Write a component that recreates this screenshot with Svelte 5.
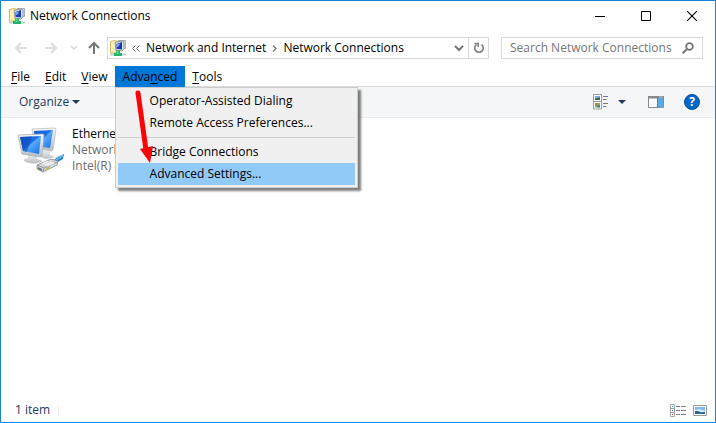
<script>
  let query = $state('');

  const menus = [
    { before: '', key: 'F', after: 'ile' },
    { before: '', key: 'E', after: 'dit' },
    { before: '', key: 'V', after: 'iew' },
    { before: 'Adva', key: 'n', after: 'ced' },
    { before: '', key: 'T', after: 'ools' }
  ];
  let openMenu = $state(3);

  const advancedItems = [
    'Operator-Assisted Dialing',
    'Remote Access Preferences...',
    null, // separator
    'Bridge Connections',
    'Advanced Settings...'
  ];
  let highlighted = $state(4);
</script>

{#snippet networkIcon()}
  <svg class="app-icon" width="16" height="16" viewBox="0 0 16 16" aria-hidden="true">
    <path d="M0.5 1.5l5-1 2 1v10l-2 1.5h-5z" fill="#f6df8b" stroke="#d5b865" />
    <path d="M1 2l4-.7v10.400l-4 .8z" fill="#fbf0b2" />
    <path d="M8 0.500h7.500v8h-3z" fill="#dfe3e6" stroke="#a7adb1" />
    <path d="M5 2.500l7-1.500 2 1v7l-2 2-6-1z" fill="#dce5ea" stroke="#8e999f" />
    <path d="M6.500 4l5.500-2v7.500l-5.500-.7z" fill="#1638b8" />
    <path d="M7 4.300l3-1-1 3-2 1z" fill="#7ba7ee" />
    <path d="M6 10.500h4v3h-4z" fill="#2aab61" />
    <path d="M0 13.500h16v2h-16z" fill="#c6cfcd" />
    <path d="M4 13h8v3h-8z" fill="#20b568" />
    <path d="M6.500 11h2v3h-2z" fill="#5fd792" />
  </svg>
{/snippet}

<div class="window">
  <header class="title-bar">
    {@render networkIcon()}
    <span class="title">Network Connections</span>
    <div class="window-buttons">
      <button aria-label="Minimize">
        <svg width="10" height="10"><path d="M0 5.500h10" stroke="#000" /></svg>
      </button>
      <button aria-label="Maximize">
        <svg width="10" height="10"><path d="M.5.5h9v9h-9z" fill="none" stroke="#000" /></svg>
      </button>
      <button aria-label="Close">
        <svg width="10" height="10"><path d="M0 0l10 10M10 0l-10 10" stroke="#000" stroke-width="1.100" /></svg>
      </button>
    </div>
  </header>

  <div class="nav-bar">
    <div class="history">
      <button aria-label="Back" disabled>
        <svg width="14" height="12"><path d="M13 6h-11M7 1l-5 5 5 5" fill="none" stroke="#dcdcdc" stroke-width="2" /></svg>
      </button>
      <button aria-label="Forward" disabled>
        <svg width="14" height="12"><path d="M1 6h11M7 1l5 5-5 5" fill="none" stroke="#dcdcdc" stroke-width="2" /></svg>
      </button>
      <button class="recent" aria-label="Recent locations" disabled>
        <svg width="8" height="6"><path d="M1 1l3 3 3-3" fill="none" stroke="#d4d4d4" stroke-width="1.500" /></svg>
      </button>
      <button class="up" aria-label="Up">
        <svg width="12" height="14"><path d="M6 13v-11M1 7l5-5 5 5" fill="none" stroke="#767676" stroke-width="2" /></svg>
      </button>
    </div>

    <div class="address">
      {@render networkIcon()}
      <button class="chevrons" aria-label="Parent folders">
        <svg width="8" height="7"><path d="M3.500.5l-3 3 3 3M7.500.5l-3 3 3 3" fill="none" stroke="#777" /></svg>
      </button>
      <button class="crumb">Network and Internet</button>
      <svg width="5" height="7" aria-hidden="true"><path d="M1 .5l3 3-3 3" fill="none" stroke="#777" stroke-width="1.300" /></svg>
      <button class="crumb">Network Connections</button>
      <button class="drop" aria-label="Previous locations">
        <svg width="10" height="7"><path d="M1 1l4 4 4-4" fill="none" stroke="#767676" stroke-width="2" /></svg>
      </button>
      <button class="refresh" aria-label="Refresh">
        <svg width="12" height="12" viewBox="0 0 12 12">
          <path d="M8.500 2.500a4.300 4.300 0 1 1-5 0" fill="none" stroke="#808080" stroke-width="1.600" />
          <path d="M1.500 1.500h3.700v3.700" fill="none" stroke="#808080" stroke-width="1.500" />
        </svg>
      </button>
    </div>

    <label class="search">
      <input type="text" placeholder="Search Network Connections" aria-label="Search Network Connections" bind:value={query} />
      <svg width="12" height="12" viewBox="0 0 12 12" aria-hidden="true">
        <circle cx="7.500" cy="4.500" r="3.300" fill="none" stroke="#767676" stroke-width="1.800" />
        <path d="M5 7l-4.300 4.300" stroke="#767676" stroke-width="2" />
      </svg>
    </label>
  </div>

  <nav class="menu-bar">
    {#each menus as menu, i}
      <div class="menu-slot">
        <button class="menu-title" class:open={openMenu === i} onclick={() => (openMenu = openMenu === i ? -1 : i)}>
          {menu.before}<u>{menu.key}</u>{menu.after}
        </button>
        {#if i === 3 && openMenu === 3}
          <div class="popup">
            {#each advancedItems as item, n}
              {#if item}
                <button class="popup-item" class:selected={highlighted === n} onmouseenter={() => (highlighted = n)}>{item}</button>
              {:else}
                <hr />
              {/if}
            {/each}
            <svg class="pointer" width="20" height="76" viewBox="0 0 20 76" aria-hidden="true">
              <path d="M5 5l8 57" stroke="#fb0307" stroke-width="5" stroke-linecap="round" />
              <path d="M7 61l13-3-3 17z" fill="#fb0307" />
            </svg>
          </div>
        {/if}
      </div>
    {/each}
  </nav>

  <div class="toolbar">
    <button class="organize">
      Organize
      <svg width="8" height="4"><path d="M0 0h8l-4 4z" fill="#1e395b" /></svg>
    </button>
    <div class="tools">
      <button aria-label="Change your view">
        <svg width="16" height="16" viewBox="0 0 16 16">
          <path d="M.5.5h8v14.500h-8zM.5 7.500h8" fill="#fff" stroke="#9a9a9a" />
          <path d="M2 2h5v4h-5z" fill="#79a9e6" />
          <path d="M2 4.500l5-1v2.500h-5z" fill="#2f6b49" />
          <path d="M2 9h5v4.500h-5z" fill="#78b45a" />
          <path d="M2 9h2.500v2.500h-2.500z" fill="#d2783b" />
          <path d="M4.500 11h2.500v2.500h-2.500z" fill="#4677b8" />
          <path d="M10 2.500h5M10 5.500h3.500M10 9.500h5M10 12.500h3.500" stroke="#777" />
        </svg>
      </button>
      <button class="views-drop" aria-label="More view options">
        <svg width="8" height="4"><path d="M0 0h8l-4 4z" fill="#1e395b" /></svg>
      </button>
      <button class="pane" aria-label="Show the preview pane">
        <svg width="16" height="12" viewBox="0 0 16 12">
          <path d="M.5.5h15v11h-15z" fill="#fff" stroke="#85898d" />
          <path d="M0 0h16v2.500h-16z" fill="#85898d" />
          <path d="M10 2h5v9.500h-5z" fill="#5aaae8" />
          <path d="M9.500 2v10" stroke="#3f84c4" />
          <path d="M11.500 1h1M13.500 1h1" stroke="#fff" />
        </svg>
      </button>
      <button class="help" aria-label="Get help">?</button>
    </div>
  </div>

  <main class="content">
    <div class="connection">
      <svg width="48" height="48" viewBox="0 0 48 48" aria-hidden="true">
        <defs>
          <linearGradient id="screen" x1="0" y1="0" x2="1" y2="1">
            <stop offset="0" stop-color="#1560cf" />
            <stop offset=".45" stop-color="#1a6fe6" />
            <stop offset=".5" stop-color="#58a8fb" />
            <stop offset="1" stop-color="#1472e8" />
          </linearGradient>
          <linearGradient id="metal" x1="0" y1="0" x2="0" y2="1">
            <stop offset="0" stop-color="#f6f7f7" />
            <stop offset="1" stop-color="#b8bec2" />
          </linearGradient>
        </defs>
        <path d="M26 23l7 1v5l5 2-9 2-8-3 5-2z" fill="url(#metal)" />
        <path d="M15 3l23-1 1 1-3 21-2 1-16-3z" fill="url(#metal)" stroke="#b3b9bd" stroke-width=".7" />
        <path d="M17 5l19-1-3 18-15-2z" fill="url(#screen)" />
        <path d="M11 28l8 1v4l6 2c-3 3-15 3-18-1l5-2z" fill="url(#metal)" stroke="#b1b7ba" stroke-width=".5" />
        <path d="M1 9l25-1 1 1-2 21-2 1-18-3z" fill="url(#metal)" stroke="#a4abb0" stroke-width=".7" />
        <path d="M3 11l21-1-2 18-16-3z" fill="url(#screen)" />
        <path d="M3 11l12-.6-5 15.400-4-.8z" fill="#0c49b5" opacity=".6" />
        <path d="M36 35l5-4 6-3-1 5-7 4z" fill="#2b86c9" />
        <path d="M38 32l8-3M39 34l7-4" stroke="#8bc7ed" />
        <path d="M20 39l14-6 7 2-1 4-14 7-6-3z" fill="#d5d8da" stroke="#81888d" stroke-width=".8" />
        <path d="M20 39l7 3 13-6M27 42l-1 4" fill="none" stroke="#91979b" />
        <path d="M25 38l6-3M28 39l7-3M30 40l7-3" stroke="#f8fafb" stroke-width="1.200" />
        <path d="M21 41l4 2v2l-4-2z" fill="#656e62" />
        <path d="M29 42l4-2v2l-4 2z" fill="#c9b94c" />
      </svg>
      <div class="details">
        <span class="name">Ethernet</span>
        <span>Network</span>
        <span>Intel(R) 8</span>
      </div>
    </div>
  </main>

  <footer class="status-bar">
    <span class="count">1 item</span>
    <div class="layouts">
      <button aria-label="Details view">
        <svg width="16" height="13" viewBox="0 0 16 13">
          <path d="M.5.5h4v12h-4zM.5 4.500h4M.5 8.500h4" fill="#fff" stroke="#a2a2a2" />
          <path d="M2 2h1v1h-1z" fill="#357ec7" />
          <path d="M2 6h1v1h-1z" fill="#357ec7" />
          <path d="M2 10h1v1h-1z" fill="#d32f2f" />
          <path d="M6 2.500h4M11 2.500h5M6 6.500h4M11 6.500h5M6 10.500h4M11 10.500h5" stroke="#808080" />
        </svg>
      </button>
      <button aria-label="Large icons view">
        <svg width="14" height="11" viewBox="0 0 14 11">
          <path d="M.5.5h13v10h-13z" fill="#fff" stroke="#9a9a9a" />
          <path d="M2 2h10v7h-10z" fill="#83b8f1" />
          <path d="M2 5l4-1 6 2v1h-10z" fill="#d7ebfa" />
          <path d="M2 6l3 0 3 1.500 4-.5v2h-10z" fill="#28658b" />
        </svg>
      </button>
    </div>
  </footer>
</div>

<style>
  :global(body) {
    margin: 0;
  }

  .window {
    display: flex;
    flex-direction: column;
    box-sizing: border-box;
    min-height: 100vh;
    border: 1px solid #1883d7;
    background: #fff;
    color: #000;
    font-family: "Open Sans", "Noto Sans", sans-serif;
    font-size: 12px;
    line-height: 16px;
  }

  button,
  input {
    padding: 0;
    border: 0;
    background: none;
    color: inherit;
    font: inherit;
  }

  button {
    display: flex;
    align-items: center;
    justify-content: center;
    white-space: nowrap;
  }

  svg {
    display: block;
    flex: none;
  }

  .title-bar {
    display: flex;
    align-items: center;
    height: 30px;
    padding-left: 8px;
  }

  .title {
    margin-left: 5px;
  }

  .window-buttons {
    display: flex;
    align-self: stretch;
    margin-left: auto;
  }

  .window-buttons button {
    width: 46px;
  }

  .nav-bar {
    display: flex;
    align-items: center;
    gap: 12px;
    height: 34px;
    padding: 0 12px 0 13px;
  }

  .history {
    display: flex;
    align-items: center;
    gap: 16px;
    margin-right: -5px;
  }

  .recent {
    margin-left: -4px;
  }

  .up {
    margin-left: -6px;
  }

  .address,
  .search {
    display: flex;
    align-items: center;
    box-sizing: border-box;
    height: 22px;
    border: 1px solid #d9d9d9;
  }

  .address {
    flex: 1;
    gap: 6px;
    padding-left: 2px;
  }

  .drop {
    margin-left: auto;
    margin-right: -2px;
  }

  .refresh {
    width: 20px;
    height: 20px;
    border-left: 1px solid #d9d9d9;
  }

  .search {
    width: 202px;
    padding: 0 8px;
  }

  .search input {
    flex: 1;
    min-width: 0;
    outline: none;
  }

  .search input::placeholder {
    color: #767676;
    opacity: 1;
  }

  .menu-bar {
    display: flex;
    height: 20px;
    margin-top: 1px;
    padding-left: 2px;
    border-bottom: 1px solid #d9dbdd;
  }

  .menu-slot {
    position: relative;
    margin-right: -1px;
  }

  .menu-title {
    height: 21px;
    padding: 0 8px;
  }

  .menu-title.open {
    background: #0078d7;
  }

  u {
    text-underline-offset: 2px;
  }

  .popup {
    position: absolute;
    top: 21px;
    left: 0;
    z-index: 1;
    box-sizing: border-box;
    width: 243px;
    padding: 2px;
    border: 1px solid #ccc;
    background: #f0f0f0;
    box-shadow: 3px 3px 2px rgba(0, 0, 0, 0.5);
  }

  .popup-item {
    justify-content: flex-start;
    width: 100%;
    height: 22px;
    padding-left: 32px;
  }

  .popup-item.selected {
    background: #91c9f7;
  }

  hr {
    height: 1px;
    margin: 3px 0;
    border: 0;
    background: #d0d0d0;
  }

  .pointer {
    position: absolute;
    top: 0;
    left: 17px;
    pointer-events: none;
  }

  .toolbar {
    display: flex;
    align-items: center;
    justify-content: space-between;
    height: 30px;
    padding: 0 15px 0 18px;
    border-bottom: 1px solid #e8ebee;
    background: #f5f6f7;
    color: #1e395b;
  }

  .organize {
    gap: 3px;
  }

  .tools {
    display: flex;
    align-items: center;
  }

  .views-drop {
    margin-left: 9px;
  }

  .pane {
    margin: 0 20px 0 22px;
  }

  .help {
    box-sizing: border-box;
    width: 16px;
    height: 16px;
    border: 1px solid #0a4f9c;
    border-radius: 50%;
    background: #0067c8;
    color: #fff;
    font-weight: 700;
  }

  .content {
    flex: 1;
    padding: 8px 16px;
  }

  .connection {
    display: flex;
    gap: 7px;
  }

  .details {
    display: flex;
    flex-direction: column;
    color: #6d6d6d;
  }

  .name {
    color: #000;
  }

  .status-bar {
    display: flex;
    align-items: center;
    justify-content: space-between;
    height: 24px;
    padding: 0 8px 0 14px;
    color: #1e395b;
  }

  .count {
    padding-right: 8px;
    border-right: 1px solid #f0f0f0;
    line-height: 12px;
  }

  .layouts {
    display: flex;
    align-items: center;
    gap: 7px;
  }
</style>
